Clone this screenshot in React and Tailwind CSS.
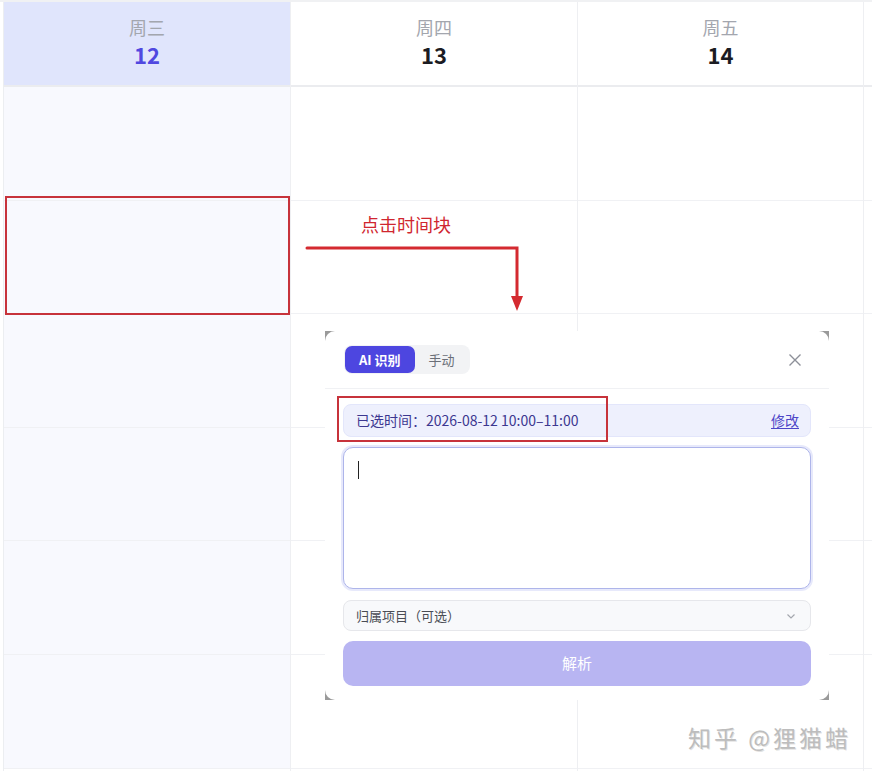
import React from 'react';

const days = [
  { name: '周三', date: '12', active: true },
  { name: '周四', date: '13' },
  { name: '周五', date: '14' },
];

const rows = [0, 1, 2, 3, 4, 5];

const font = { fontFamily: '"Noto Sans CJK SC", "Noto Sans", sans-serif' };

const DayColumn = ({ day, width }) => (
  <div className={`flex flex-col shrink-0 border-r border-[#eeeff2] ${width}`}>
    <div
      className={`h-[85px] pb-[3px] flex flex-col items-center justify-center border-b-2 border-[#ebecef] ${
        day.active ? 'bg-[#e0e5fc]' : 'bg-white'
      }`}
    >
      <span className="text-[18px] leading-[20px] text-[#a3a6ae]">{day.name}</span>
      <span
        className={`mt-[4px] text-[22px] leading-[26px] font-bold ${
          day.active ? 'text-[#5048e0]' : 'text-[#1b1c22]'
        }`}
      >
        {day.date}
      </span>
    </div>
    {rows.map((r) => (
      <div
        key={r}
        className={`h-[113.6px] border-b border-[#f0f1f4] ${day.active ? 'bg-[#f8f9fe]' : 'bg-white'}`}
      />
    ))}
  </div>
);

const QuickCreate = () => (
  <div className="absolute left-[325px] top-[331px] w-[504px] h-[369px] bg-[#9a9a9a]">
    <div className="w-full h-full bg-white rounded-[10px] flex flex-col">
      <div className="h-[58px] flex items-center justify-between pl-[19px] pr-[27px] border-b border-[#f0f1f4]">
        <div className="flex items-center bg-[#f2f3f5] rounded-[8px] p-[1px] h-[29px]">
          <button className="h-[27px] px-[14px] rounded-[7px] bg-[#4d46e0] text-white text-[13px] font-bold">
            AI 识别
          </button>
          <button className="h-[27px] px-[14px] text-[13px] text-[#6b6f78]">手动</button>
        </div>
        <svg width="14" height="14" viewBox="0 0 14 14" className="text-[#8d9099]">
          <path d="M1.5 1.5 L12.5 12.5 M12.5 1.5 L1.5 12.5" stroke="currentColor" strokeWidth="1.4" fill="none" />
        </svg>
      </div>
      <div className="flex flex-col gap-[10px] px-[18px] pt-[15px]">
        <div className="relative h-[33px] rounded-[8px] bg-[#eef0fd] border border-[#e3e6fb] flex items-center justify-between pl-[12px] pr-[11px]">
          <span className="text-[14px] text-[#3c3790]">已选时间：2026-08-12 10:00–11:00</span>
          <span className="text-[14px] text-[#4d46c8] underline underline-offset-2">修改</span>
          <div className="absolute left-[-7px] top-[-9px] w-[271px] h-[46px] border-2 border-[#c7333b]" />
        </div>
        <div className="h-[142px] rounded-[10px] border border-[#aeb5ea] ring-2 ring-[#e7e9fb] bg-white pl-[14px] pt-[13px]">
          <div className="w-px h-[18px] bg-[#222]" />
        </div>
        <div className="mt-[1px] h-[31px] rounded-[8px] bg-[#f8f9fb] border border-[#e6e7eb] flex items-center justify-between pl-[12px] pr-[13px]">
          <span className="text-[13px] text-[#4a4d55]">归属项目（可选）</span>
          <svg width="12" height="12" viewBox="0 0 12 12">
            <path d="M2.5 4.5 L6 8 L9.5 4.5" stroke="#a4a7ae" strokeWidth="1.2" fill="none" />
          </svg>
        </div>
        <button className="h-[45px] rounded-[10px] bg-[#b8b5f2] text-white text-[15px]">解析</button>
      </div>
    </div>
  </div>
);

const App = () => {
  return (
    <div className="relative w-[872px] h-[771px] overflow-hidden bg-white" style={font}>
      <div className="flex h-full border-t-2 border-[#f0f1f3]">
        <div className="w-[4px] shrink-0 border-r border-[#eceef1]" />
        <DayColumn day={days[0]} width="w-[287px]" />
        <DayColumn day={days[1]} width="w-[287px]" />
        <DayColumn day={days[2]} width="w-[286px]" />
        <div className="flex-1 flex flex-col">
          <div className="h-[85px] border-b-2 border-[#ebecef]" />
          {rows.map((r) => (
            <div key={r} className="h-[113.6px] border-b border-[#f0f1f4]" />
          ))}
        </div>
      </div>

      {/* selected slot highlight */}
      <div className="absolute left-[5px] top-[196px] w-[285px] h-[119px] border-2 border-[#c7333b]" />

      <span className="absolute left-[361px] top-[211px] text-[18px] leading-[26px] text-[#d0262f]">
        点击时间块
      </span>
      <svg className="absolute left-0 top-0" width="872" height="771">
        <path d="M307 248 L517 248 L517 300" stroke="#d42a30" strokeWidth="3" fill="none" strokeLinecap="round" />
        <polygon points="511,296 523,296 517,311" fill="#d42a30" />
      </svg>

      <QuickCreate />

      <span
        className="absolute left-[688px] top-[721px] text-[23px] leading-[32px] text-[#bdbdbd] tracking-[3px]"
        style={{ textShadow: '1px 1px 0 rgba(140,140,140,0.25)' }}
      >
        知乎 @狸猫蜡
      </span>
    </div>
  );
};

export default App;
